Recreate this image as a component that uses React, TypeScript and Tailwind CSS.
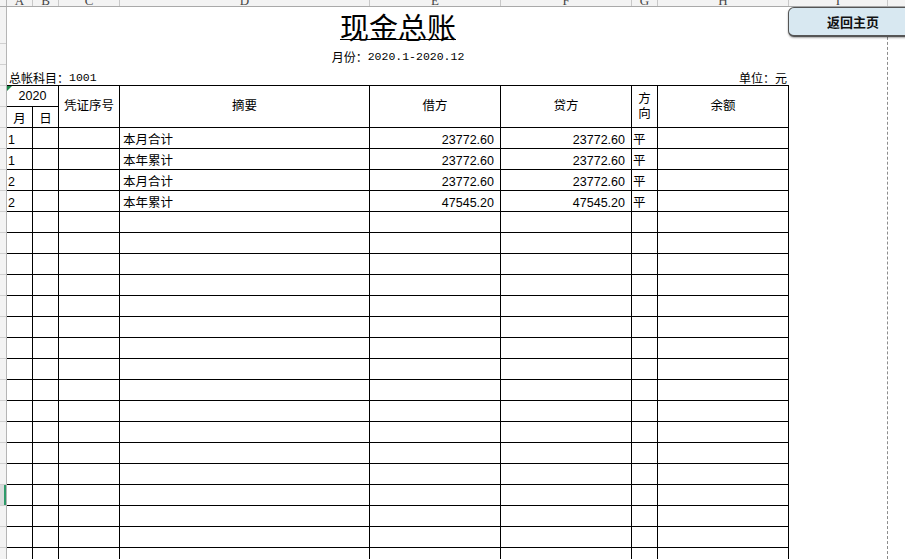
import React from 'react';

// spreadsheet column letters + widths (px, each includes its right border)
const COLS: { name: string; w: string }[] = [
  { name: 'A', w: 'w-[26px]' },
  { name: 'B', w: 'w-[26px]' },
  { name: 'C', w: 'w-[61px]' },
  { name: 'D', w: 'w-[250px]' },
  { name: 'E', w: 'w-[131px]' },
  { name: 'F', w: 'w-[131px]' },
  { name: 'G', w: 'w-[26px]' },
  { name: 'H', w: 'w-[131px]' },
  { name: 'I', w: 'w-[99px]' },
];

type Row = { m: string; summary: string; debit: string; credit: string; dir: string };

const DATA: Row[] = [
  { m: '1', summary: '本月合计', debit: '23772.60', credit: '23772.60', dir: '平' },
  { m: '1', summary: '本年累计', debit: '23772.60', credit: '23772.60', dir: '平' },
  { m: '2', summary: '本月合计', debit: '23772.60', credit: '23772.60', dir: '平' },
  { m: '2', summary: '本年累计', debit: '47545.20', credit: '47545.20', dir: '平' },
];

const ROWS: Row[] = [
  ...DATA,
  ...Array.from({ length: 17 }, () => ({ m: '', summary: '', debit: '', credit: '', dir: '' })),
];

const cell = 'border-r border-b border-black';

function ColumnHeader() {
  return (
    <div className="flex h-[7px] border-b border-[#a9a9a9] bg-[#f3f3f3]">
      <div className="w-[7px] shrink-0 border-r border-[#b5b5b5]" />
      {COLS.map((c) => (
        <div
          key={c.name}
          className={`${c.w} shrink-0 flex items-end justify-center overflow-hidden border-r border-[#c8c8c8] font-['Liberation_Serif',serif] text-[13px] leading-[11px] text-[#444]`}
        >
          {c.name}
        </div>
      ))}
    </div>
  );
}

function RowHeader() {
  return (
    <div className="flex w-[7px] shrink-0 flex-col border-r border-[#b5b5b5] bg-[#f3f3f3]">
      <div className="h-[37px] shrink-0 border-b border-[#d0d0d0]" />
      {Array.from({ length: 25 }, (_, i) =>
        i === 21 ? (
          <div key={i} className="flex h-[21px] shrink-0 border-b border-[#d0d0d0] bg-[#d9dcdc]">
            <div className="flex-1" />
            <div className="w-[2px] bg-[#2f9b6a]" />
          </div>
        ) : (
          <div key={i} className="h-[21px] shrink-0 border-b border-[#d0d0d0]" />
        )
      )}
    </div>
  );
}

function Ledger() {
  return (
    <div className="grid grid-cols-[26px_26px_61px_250px_131px_131px_26px_131px] auto-rows-[21px] border-t border-black font-['Liberation_Sans','Noto_Sans_CJK_SC',sans-serif] text-[12.5px] leading-[15px] text-black">
      {/* header */}
      <div className={`${cell} relative col-span-2 flex items-end justify-center pb-[2px]`}>
        <span className="absolute left-0 top-0 h-0 w-0 border-t-[5px] border-r-[5px] border-t-[#1e8a4a] border-r-transparent" />
        2020
      </div>
      <div className={`${cell} row-span-2 flex items-center justify-center`}>凭证序号</div>
      <div className={`${cell} row-span-2 flex items-center justify-center`}>摘要</div>
      <div className={`${cell} row-span-2 flex items-center justify-center`}>借方</div>
      <div className={`${cell} row-span-2 flex items-center justify-center`}>贷方</div>
      <div className={`${cell} row-span-2 flex flex-col items-center justify-center leading-[15px]`}>
        <span>方</span>
        <span>向</span>
      </div>
      <div className={`${cell} row-span-2 flex items-center justify-center`}>余额</div>
      <div className={`${cell} flex items-end justify-center`}>月</div>
      <div className={`${cell} flex items-end justify-center`}>日</div>

      {/* body */}
      {ROWS.map((r, i) => (
        <React.Fragment key={i}>
          <div className={`${cell} flex items-end pl-[1px]`}>{r.m}</div>
          <div className={cell} />
          <div className={cell} />
          <div className={`${cell} flex items-end pl-[3px]`}>{r.summary}</div>
          <div className={`${cell} flex items-end justify-end pr-[6px]`}>{r.debit}</div>
          <div className={`${cell} flex items-end justify-end pr-[6px]`}>{r.credit}</div>
          <div className={`${cell} flex items-end pl-[1px]`}>{r.dir}</div>
          <div className={cell} />
        </React.Fragment>
      ))}
    </div>
  );
}

export default function App() {
  return (
    <div className="relative h-[559px] w-[905px] overflow-hidden bg-white">
      <ColumnHeader />
      <div className="flex h-[552px]">
        <RowHeader />
        <div className="flex">
          <div className="w-[782px] shrink-0">
            {/* title block */}
            <div className="flex h-[40px] items-start justify-center">
              <h1 className="mt-[2px] font-['Noto_Sans_CJK_SC',sans-serif] text-[29px] font-normal leading-[34px] text-black underline decoration-1 underline-offset-[0px]">
                现金总账
              </h1>
            </div>
            <div className="flex h-[20px] items-center justify-center text-black">
              <span className="font-['Noto_Sans_CJK_SC',sans-serif] text-[12px]">月份：</span>
              <span className="font-['Liberation_Mono',monospace] text-[11.5px]">2020.1-2020.12</span>
            </div>
            <div className="flex h-[18px] items-end justify-between px-[2px] text-black">
              <div className="flex items-end leading-[14px]">
                <span className="font-['Noto_Sans_CJK_SC',sans-serif] text-[12px]">总帐科目：</span>
                <span className="font-['Liberation_Mono',monospace] text-[11.5px]">1001</span>
              </div>
              <span className="font-['Noto_Sans_CJK_SC',sans-serif] text-[12px] leading-[14px]">单位：元</span>
            </div>
            <Ledger />
          </div>
          {/* page break */}
          <div className="w-[99px] shrink-0 border-r border-dashed border-[#8c8c8c]" />
        </div>
      </div>

      <button className="absolute left-[788px] top-[7px] flex h-[30px] w-[130px] items-center justify-center rounded-[6px] border border-b-2 border-[#555] bg-[#d8e8f1] font-['Noto_Sans_CJK_SC',sans-serif] text-[13px] font-bold text-[#111] shadow-[0_1px_2px_rgba(0,0,0,0.35)]">
        返回主页
      </button>
    </div>
  );
}
